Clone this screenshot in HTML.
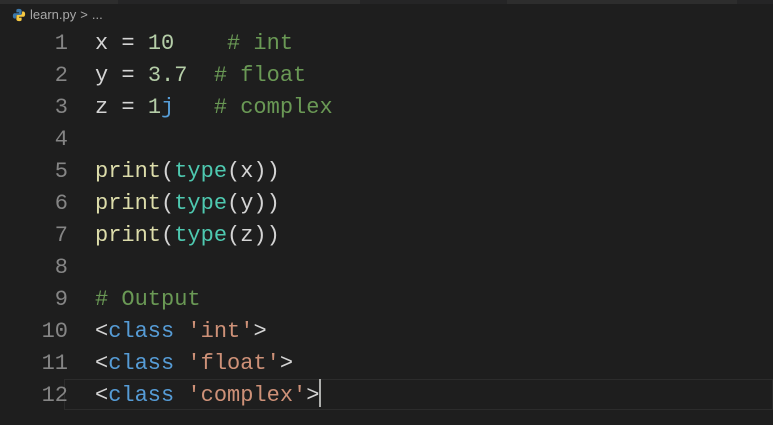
<!DOCTYPE html>
<html><head><style>
body{margin:0;width:773px;height:425px;background:#1e1e1e;overflow:hidden;position:relative;font-family:"Liberation Mono",monospace;}
.tabs{position:absolute;top:0;left:0;width:773px;height:4px;background:#252526;}
.tabs i{position:absolute;top:0;height:4px;background:#2d2d2d;}
.bc{position:absolute;top:7px;left:12px;font:13px "Liberation Sans",sans-serif;color:#a9a9a9;display:flex;align-items:center;gap:4px;}
.ln{position:absolute;left:0;width:68px;text-align:right;font-size:22px;color:#858585;line-height:32px;}
.code{position:absolute;left:95px;font-size:22px;line-height:32px;color:#d4d4d4;white-space:pre;}
.cur{position:absolute;left:64px;top:379px;width:709px;height:31px;border:1px solid #2c2c2c;box-sizing:border-box;}
.caret{display:inline-block;width:2px;height:28px;background:#aeafad;vertical-align:middle;margin-top:-4px}
.n{color:#b5cea8}.c{color:#6a9955}.f{color:#dcdcaa}.t{color:#4ec9b0}.k{color:#569cd6}.s{color:#ce9178}
</style></head><body>
<div class="tabs"><i style="left:0;width:118px"></i><i style="left:240px;width:120px"></i><i style="left:507px;width:230px"></i></div>
<div class="bc"><svg width="14" height="14" viewBox="0 0 16 16"><path d="M8 1C5 1 5 2 5 3v2h3v1H3C1.5 6 1 7.5 1 9s.5 3 2 3h1.5v-2c0-1 1-2 2-2h3c1 0 1.5-.5 1.5-1.5V3c0-1-1-2-3-2z" fill="#3c78aa"/><path d="M8 15c3 0 3-1 3-2v-2H8v-1h5c1.5 0 2-1.5 2-3s-.5-3-2-3h-1.5v2c0 1-1 2-2 2h-3C5.5 8 5 8.5 5 9.5V13c0 1 1 2 3 2z" fill="#f5c842"/></svg><span>learn.py</span><span>&gt;</span><span>...</span></div>
<div class="cur"></div>
<div class="ln" style="top:28px">1<br>2<br>3<br>4<br>5<br>6<br>7<br>8<br>9<br>10<br>11<br>12</div>
<div class="code" style="top:28px">x = <span class="n">10</span>    <span class="c"># int</span>
y = <span class="n">3.7</span>  <span class="c"># float</span>
z = <span class="n">1</span><span class="k">j</span>   <span class="c"># complex</span>

<span class="f">print</span>(<span class="t">type</span>(x))
<span class="f">print</span>(<span class="t">type</span>(y))
<span class="f">print</span>(<span class="t">type</span>(z))

<span class="c"># Output</span>
&lt;<span class="k">class</span> <span class="s">'int'</span>&gt;
&lt;<span class="k">class</span> <span class="s">'float'</span>&gt;
&lt;<span class="k">class</span> <span class="s">'complex'</span>&gt;<span class="caret"></span></div>
</body></html>
